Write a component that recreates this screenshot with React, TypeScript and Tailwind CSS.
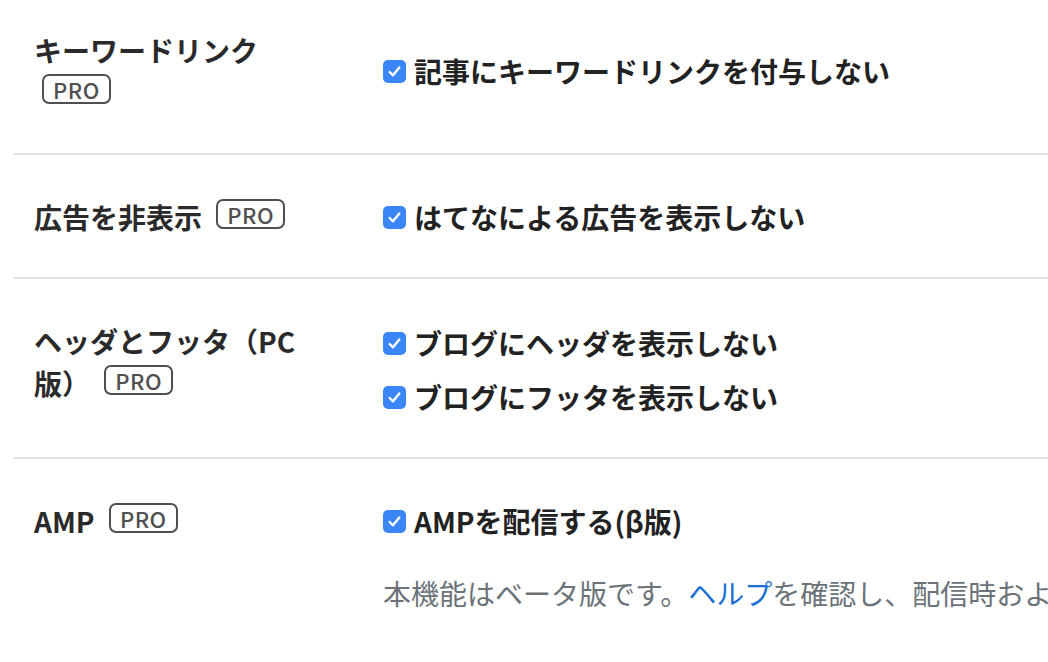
import React from 'react';

const font = { fontFamily: '"Noto Sans CJK JP", "Noto Sans", sans-serif' };

function Pro() {
  return (
    <span className="ml-2 inline-block rounded-[7px] border-2 border-solid border-[#4f4f4f] px-[9px] align-[5px] text-[22px] font-medium leading-[26px] tracking-[0.5px] text-[#505050]">
      PRO
    </span>
  );
}

function Check({ children }: { children: React.ReactNode }) {
  return (
    <label className="flex h-[42px] items-center gap-[8px] text-[28px] font-bold text-[#222]">
      <span className="flex h-[23px] w-[23px] shrink-0 items-center justify-center rounded-[5px] bg-[#3b86f7]">
        <svg width="15" height="15" viewBox="0 0 14 14" fill="none">
          <path d="M2.5 7.5 L5.6 10.6 L11.5 3.2" stroke="white" strokeWidth="2.2" strokeLinecap="round" strokeLinejoin="round" />
        </svg>
      </span>
      <span className="whitespace-nowrap">{children}</span>
    </label>
  );
}

function Row({
  label,
  children,
  first,
  center,
}: {
  label: React.ReactNode;
  children: React.ReactNode;
  first?: boolean;
  center?: boolean;
}) {
  return (
    <div
      className={`flex ${center ? 'items-center' : 'items-start'} border-[#dfe3e6] pl-[20px] ${
        first ? 'pt-[29px] pb-[40px]' : 'border-t-2 pt-[41px] pb-[39px]'
      }`}
    >
      <div className="w-[349px] shrink-0 pr-[70px] text-[28px] font-bold leading-[42px] text-[#2a2a2a]">{label}</div>
      <div className="min-w-0 flex-1">{children}</div>
    </div>
  );
}

export default function App() {
  return (
    <div className="h-[662px] w-[1048px] overflow-hidden bg-white" style={font}>
      <div className="ml-[14px]">
        <Row first center label={<>キーワードリンク <Pro /></>}>
          <Check>記事にキーワードリンクを付与しない</Check>
        </Row>
        <Row label={<>広告を非表示 <Pro /></>}>
          <Check>はてなによる広告を表示しない</Check>
        </Row>
        <Row label={<>ヘッダとフッタ（PC版） <Pro /></>}>
          <div className="flex flex-col gap-[12px] pt-[2px]">
            <Check>ブログにヘッダを表示しない</Check>
            <Check>ブログにフッタを表示しない</Check>
          </div>
        </Row>
        <Row label={<>AMP <Pro /></>}>
          <Check>AMPを配信する(β版)</Check>
          <p className="mt-[30px] whitespace-nowrap text-[28px] leading-[42px] text-[#6b7379]">
            本機能はベータ版です。<a className="text-[#1a6fd4]">ヘルプ</a>
            を確認し、配信時およびその後の表示についてご了承の上でご利用ください。
          </p>
        </Row>
      </div>
    </div>
  );
}
